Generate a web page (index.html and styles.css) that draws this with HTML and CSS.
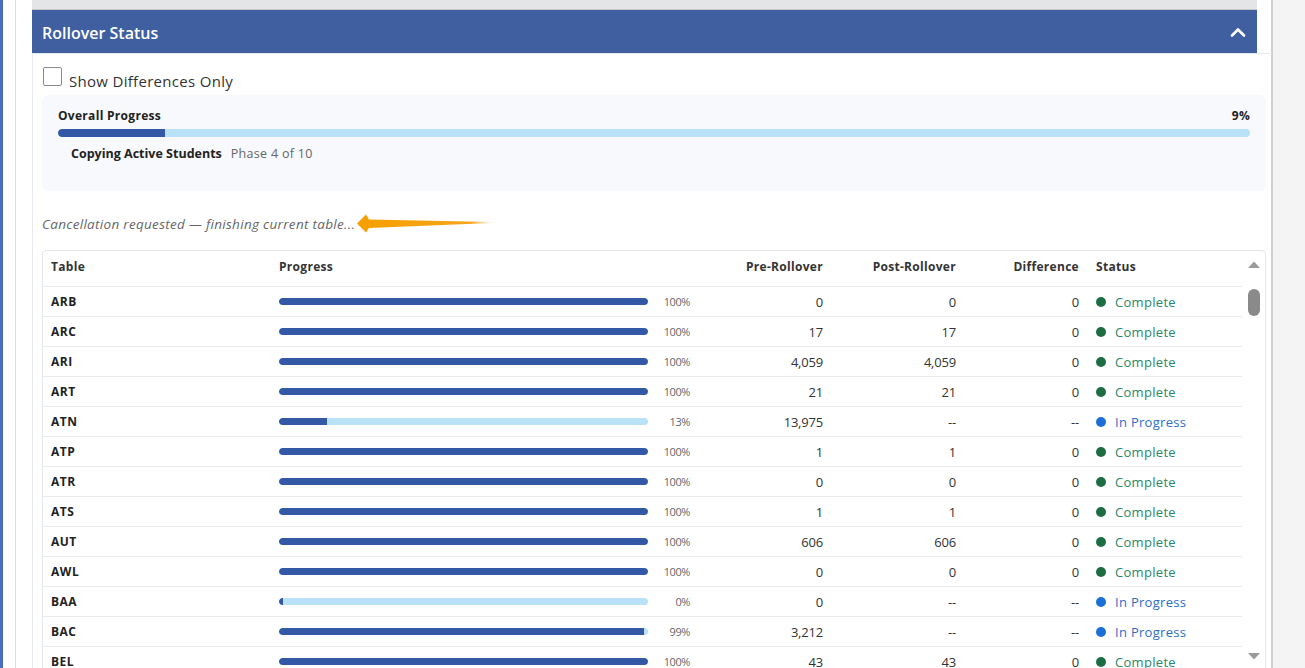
FILE: index.html
```html
<!DOCTYPE html>
<html>
<head>
<meta charset="utf-8">
<link rel="stylesheet" href="styles.css">
</head>
<body>
<div class="edge"></div>
<div class="gutter"></div>
<div class="page">
  <div class="panel">
    <div class="strip"></div>
    <div class="header">
      <span class="title">Rollover Status</span>
      <svg class="chev" width="16" height="10" viewBox="0 0 16 10"><polyline points="2,8.5 8,2.5 14,8.5" fill="none" stroke="#fff" stroke-width="2.6" stroke-linecap="round" stroke-linejoin="round"/></svg>
    </div>
    <div class="content">
      <label class="check"><span class="box"></span><span>Show Differences Only</span></label>
      <div class="overall">
        <div class="ov-top"><span class="ov-label">Overall Progress</span><span class="ov-pct">9%</span></div>
        <div class="track big"><div class="fill" style="width:9%"></div></div>
        <div class="phase"><span class="phase-name">Copying Active Students</span><span class="phase-num">Phase 4 of 10</span></div>
      </div>
      <div class="cancel">
        <span>Cancellation requested — finishing current table...</span>
        <svg class="arrow" width="140" height="20" viewBox="0 0 140 20">
          <defs><linearGradient id="g" x1="0" x2="1" y1="0" y2="0"><stop offset="0" stop-color="#f59f00"/><stop offset="0.85" stop-color="#f7a51a"/><stop offset="1" stop-color="#f7a51a" stop-opacity="0"/></linearGradient></defs>
          <polygon points="0,9.5 9,0.5 12,5.5 135,8 135,9 12,14 9,18.5" fill="url(#g)"/>
        </svg>
      </div>
      <div class="tablebox">
        <div class="tbl">
          <div class="row head">
            <div>Table</div><div>Progress</div><div class="num">Pre-Rollover</div><div class="num">Post-Rollover</div><div class="num">Difference</div><div class="st">Status</div>
          </div>
          <div class="row"><div class="nm">ARB</div><div class="pg"><div class="track"><div class="fill" style="width:100%"></div></div><span class="pct">100%</span></div><div class="num">0</div><div class="num">0</div><div class="num">0</div><div class="st ok"><i></i>Complete</div></div>
          <div class="row"><div class="nm">ARC</div><div class="pg"><div class="track"><div class="fill" style="width:100%"></div></div><span class="pct">100%</span></div><div class="num">17</div><div class="num">17</div><div class="num">0</div><div class="st ok"><i></i>Complete</div></div>
          <div class="row"><div class="nm">ARI</div><div class="pg"><div class="track"><div class="fill" style="width:100%"></div></div><span class="pct">100%</span></div><div class="num">4,059</div><div class="num">4,059</div><div class="num">0</div><div class="st ok"><i></i>Complete</div></div>
          <div class="row"><div class="nm">ART</div><div class="pg"><div class="track"><div class="fill" style="width:100%"></div></div><span class="pct">100%</span></div><div class="num">21</div><div class="num">21</div><div class="num">0</div><div class="st ok"><i></i>Complete</div></div>
          <div class="row"><div class="nm">ATN</div><div class="pg"><div class="track"><div class="fill" style="width:13%"></div></div><span class="pct">13%</span></div><div class="num">13,975</div><div class="num">--</div><div class="num">--</div><div class="st ip"><i></i>In Progress</div></div>
          <div class="row"><div class="nm">ATP</div><div class="pg"><div class="track"><div class="fill" style="width:100%"></div></div><span class="pct">100%</span></div><div class="num">1</div><div class="num">1</div><div class="num">0</div><div class="st ok"><i></i>Complete</div></div>
          <div class="row"><div class="nm">ATR</div><div class="pg"><div class="track"><div class="fill" style="width:100%"></div></div><span class="pct">100%</span></div><div class="num">0</div><div class="num">0</div><div class="num">0</div><div class="st ok"><i></i>Complete</div></div>
          <div class="row"><div class="nm">ATS</div><div class="pg"><div class="track"><div class="fill" style="width:100%"></div></div><span class="pct">100%</span></div><div class="num">1</div><div class="num">1</div><div class="num">0</div><div class="st ok"><i></i>Complete</div></div>
          <div class="row"><div class="nm">AUT</div><div class="pg"><div class="track"><div class="fill" style="width:100%"></div></div><span class="pct">100%</span></div><div class="num">606</div><div class="num">606</div><div class="num">0</div><div class="st ok"><i></i>Complete</div></div>
          <div class="row"><div class="nm">AWL</div><div class="pg"><div class="track"><div class="fill" style="width:100%"></div></div><span class="pct">100%</span></div><div class="num">0</div><div class="num">0</div><div class="num">0</div><div class="st ok"><i></i>Complete</div></div>
          <div class="row"><div class="nm">BAA</div><div class="pg"><div class="track"><div class="fill" style="width:1%"></div></div><span class="pct">0%</span></div><div class="num">0</div><div class="num">--</div><div class="num">--</div><div class="st ip"><i></i>In Progress</div></div>
          <div class="row"><div class="nm">BAC</div><div class="pg"><div class="track"><div class="fill" style="width:99%"></div></div><span class="pct">99%</span></div><div class="num">3,212</div><div class="num">--</div><div class="num">--</div><div class="st ip"><i></i>In Progress</div></div>
          <div class="row"><div class="nm">BEL</div><div class="pg"><div class="track"><div class="fill" style="width:100%"></div></div><span class="pct">100%</span></div><div class="num">43</div><div class="num">43</div><div class="num">0</div><div class="st ok"><i></i>Complete</div></div>
        </div>
        <div class="sbar">
          <svg class="sarrow up" width="12" height="8" viewBox="0 0 12 8"><polygon points="0,7 6,0.5 12,7" fill="#9a9a9a"/></svg>
          <div class="thumb"></div>
          <div class="sfill"></div>
          <svg class="sarrow" width="12" height="8" viewBox="0 0 12 8"><polygon points="0,1 12,1 6,7.5" fill="#9a9a9a"/></svg>
        </div>
      </div>
    </div>
  </div>
</div>
<div class="rightbg"></div>
</body>
</html>
```
FILE: styles.css
```css
* { box-sizing: border-box; }
html, body { margin: 0; height: 668px; overflow: hidden; }
body {
  display: flex;
  font-family: "Open Sans", Lato, sans-serif;
  color: #333;
  background: #fff;
}
.edge { width: 3px; background: #4a6dc4; flex: none; }
.gutter { width: 13px; border-right: 1px solid #dcdcdc; flex: none; }
.page { width: 1257px; flex: none; padding-left: 16px; border-right: 2px solid #cfcfcf; }
.rightbg { flex: 1; background: #f4f4f4; }
.panel { width: 1240px; }
.strip { width: 1225px; height: 10px; background: #e4e5e6; border-bottom: 1px solid #c9c9c9; }
.header {
  width: 1225px; height: 43px; background: #3f5fa0;
  display: flex; align-items: center; justify-content: space-between;
  padding: 0 11px 0 10px;
}
.title { color: #fff; font-size: 16px; font-weight: 600; letter-spacing: 0; margin-top: 2px; }
.content {
  border-left: 1px solid #e6e9ef; border-top: 1px solid #e3e8f0;
  padding: 15px 6px 0 9px; height: 620px;
}
.check { display: flex; align-items: center; gap: 7px; font-size: 15px; letter-spacing: 0.3px; color: #333; padding-left: 1px; height: 20px; padding-top: 4px; }
.box { width: 19px; height: 19px; border: 1px solid #8a8a8a; border-radius: 2px; background: #fff; margin-top: -10px; }
.overall {
  margin-top: 6px; background: #f7f9fc; border-radius: 6px;
  height: 96px; padding: 12px 16px 0 16px;
}
.ov-top { display: flex; justify-content: space-between; font-size: 12px; font-weight: 700; color: #222; letter-spacing: 0.3px; line-height: 17px; }
.track { height: 7px; background: #b9e2f8; border-radius: 4px; overflow: hidden; }
.track.big { height: 8px; margin-top: 5px; }
.fill { height: 100%; background: #3358a6; border-radius: 4px 0 0 4px; }
.track .fill[style="width:100%"] { border-radius: 4px; }
.phase { margin-top: 8px; padding-left: 13px; font-size: 12.5px; display: flex; gap: 9px; }
.phase-name { font-weight: 700; color: #222; letter-spacing: 0; }
.phase-num { color: #666; letter-spacing: 0.3px; }
.cancel { height: 59px; display: flex; align-items: center; font-size: 13.5px; font-style: italic; color: #666; padding-top: 6px; letter-spacing: 0.3px; }
.arrow { margin-left: 2px; margin-top: 1px; }
.tablebox {
  border: 1px solid #e3e6ec; border-radius: 4px; display: flex; height: 430px;
}
.tbl { width: 1200px; }
.row {
  display: grid; grid-template-columns: 228px 411px 133px 133px 123px 1fr;
  padding-left: 8px; height: 30px; align-items: center;
  border-bottom: 1px solid #e8ebf0; font-size: 13px; letter-spacing: -0.2px;
}
.row.head { height: 36px; padding-bottom: 4px; font-size: 12px; font-weight: 700; color: #333; letter-spacing: 0.3px; }
.num { text-align: right; }
.st { padding-left: 17px; display: flex; align-items: center; letter-spacing: 0.3px; }
.st i { width: 10px; height: 10px; border-radius: 50%; margin-right: 9px; }
.ok { color: #2a8767; }
.ok i { background: #1c6e42; }
.ip { color: #2d6dc8; }
.ip i { background: #1b6fd6; }
.nm { font-weight: 700; font-size: 12px; color: #222; letter-spacing: 0.5px; }
.pg { display: flex; align-items: center; }
.pg .track { width: 369px; }
.pct { width: 42px; text-align: right; font-size: 11px; color: #666; letter-spacing: -0.4px; }
.sbar { width: 23px; display: flex; flex-direction: column; align-items: center; padding-top: 10px; }
.sarrow.up { margin-bottom: 20px; }
.thumb { width: 12px; height: 27px; border-radius: 6px; background: #8a8a8a; }
.sfill { flex: 1; }
.sarrow { margin-bottom: 19px; }
```
